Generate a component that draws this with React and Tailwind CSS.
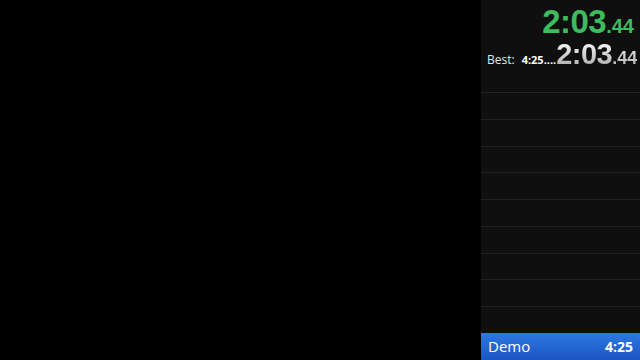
const rows = Array.from({ length: 9 });

const App = () => {
  return (
    <div className="w-[640px] h-[360px] bg-black flex overflow-hidden" style={{ fontFamily: '"Open Sans", "Liberation Sans", sans-serif' }}>
      {/* game area */}
      <div className="flex-1 bg-black" />

      {/* splits panel */}
      <div className="w-[159px] h-full bg-[#0f0f0f] flex flex-col">
        <div className="h-[93px] flex flex-col px-[6px] border-b border-[#242424]">
          {/* main timer */}
          <div className="flex justify-end items-baseline h-[38px] pt-[5px] text-[#3dbb5e] font-bold leading-none" style={{ fontFamily: '"Liberation Sans", sans-serif' }}>
            <span className="text-[33px] tracking-[-0.5px]">2:03</span>
            <span className="text-[20px]">.44</span>
          </div>
          {/* best */}
          <div className="flex items-baseline leading-none mt-[2px]">
            <span className="text-[12px] text-[#e6e6e6]">Best:</span>
            <span className="text-[11px] font-bold text-white ml-[7px]">4:25....</span>
            <span className="ml-auto flex items-baseline font-bold text-transparent bg-clip-text bg-gradient-to-b from-[#ffffff] to-[#a8a8a8]" style={{ fontFamily: '"Liberation Sans", sans-serif' }}>
              <span className="text-[29px] tracking-[-0.5px]">2:03</span>
              <span className="text-[18px]">.44</span>
            </span>
          </div>
        </div>

        {/* empty split rows */}
        <div className="flex-1 flex flex-col">
          {rows.map((_, i) => (
            <div key={i} className="flex-1 border-b border-[#222] last:border-b-0" />
          ))}
        </div>

        {/* footer */}
        <div className="h-[27px] flex items-center justify-between px-[7px] bg-gradient-to-b from-[#2f78e0] to-[#1b55c4] text-white">
          <span className="text-[15px]">Demo</span>
          <span className="text-[14px] font-bold">4:25</span>
        </div>
      </div>
    </div>
  );
};

export default App;
